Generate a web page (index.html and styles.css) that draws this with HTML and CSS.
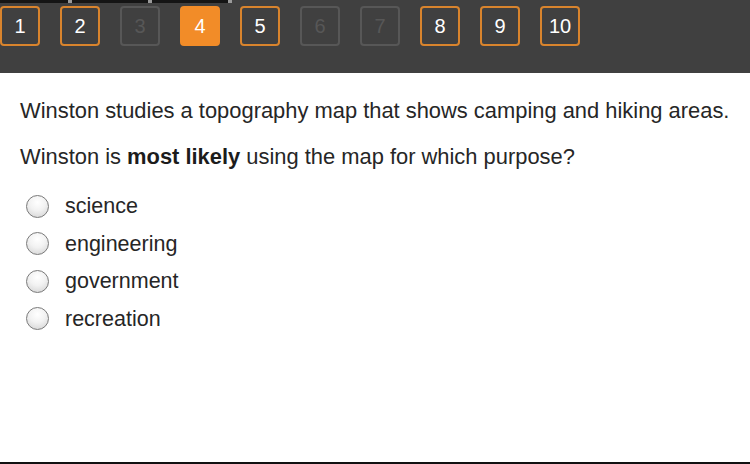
FILE: index.html
```html
<!DOCTYPE html>
<html>
<head>
<meta charset="utf-8">
<link rel="stylesheet" href="styles.css">
</head>
<body>
<div class="page">
  <header class="header">
    <div class="strip"><span class="mark m1"></span><span class="mark m2"></span><span class="mark m3"></span></div>
    <nav class="pager">
      <span class="pg">1</span>
      <span class="pg">2</span>
      <span class="pg off">3</span>
      <span class="pg cur">4</span>
      <span class="pg">5</span>
      <span class="pg off">6</span>
      <span class="pg off">7</span>
      <span class="pg">8</span>
      <span class="pg">9</span>
      <span class="pg">10</span>
    </nav>
  </header>
  <main class="content">
    <p class="q">Winston studies a topography map that shows camping and hiking areas.</p>
    <p class="q q2">Winston is <b>most likely</b> using the map for which purpose?</p>
    <ul class="opts">
      <li class="opt"><span class="radio"></span><span>science</span></li>
      <li class="opt"><span class="radio"></span><span>engineering</span></li>
      <li class="opt"><span class="radio"></span><span>government</span></li>
      <li class="opt"><span class="radio"></span><span>recreation</span></li>
    </ul>
  </main>
  <div class="bottom"></div>
</div>
</body>
</html>
```
FILE: styles.css
```css
html, body { margin: 0; padding: 0; }
body { width: 750px; height: 464px; overflow: hidden; background: #fff; font-family: "Liberation Sans", Arial, sans-serif; }
.page { display: flex; flex-direction: column; height: 464px; }
.header { background: #404040; height: 73px; box-sizing: border-box; }
.strip { height: 3px; width: 232px; background: #151515; position: relative; }
.mark { position: absolute; top: 0; width: 4px; height: 3px; background: #9a9a9a; }
.m1 { left: 68px; } .m2 { left: 148px; } .m3 { left: 228px; }
.pager { display: flex; gap: 20px; margin-top: 3px; }
.pg { width: 40px; height: 40px; box-sizing: border-box; border: 2px solid #d9842d; border-radius: 4px; color: #fff; font-size: 20px; display: flex; align-items: center; justify-content: center; }
.pg.off { border-color: #575757; color: #575757; }
.pg.cur { background: #f28c28; border-color: #f28c28; color: #fff; }
.content { flex: 1; padding: 0 0 0 20px; color: #262626; }
.q { margin: 0; font-size: 21.9px; line-height: 24px; }
.q:first-child { margin-top: 26px; }
.q2 { margin-top: 22px; }
.q2 b { font-weight: bold; color: #1c1c1c; }
.opts { list-style: none; margin: 25px 0 0 0; padding: 0; display: flex; flex-direction: column; gap: 13.5px; }
.opt { display: flex; align-items: center; gap: 16px; font-size: 21.5px; line-height: 24px; padding-left: 6px; }
.radio { width: 23px; height: 23px; box-sizing: border-box; border-radius: 50%; border: 1.5px solid #7a7a7a; background: radial-gradient(circle at 50% 30%, #ffffff 0%, #f2f2f2 45%, #d0d0d0 100%); }
.bottom { height: 2px; background: #111; }
```
